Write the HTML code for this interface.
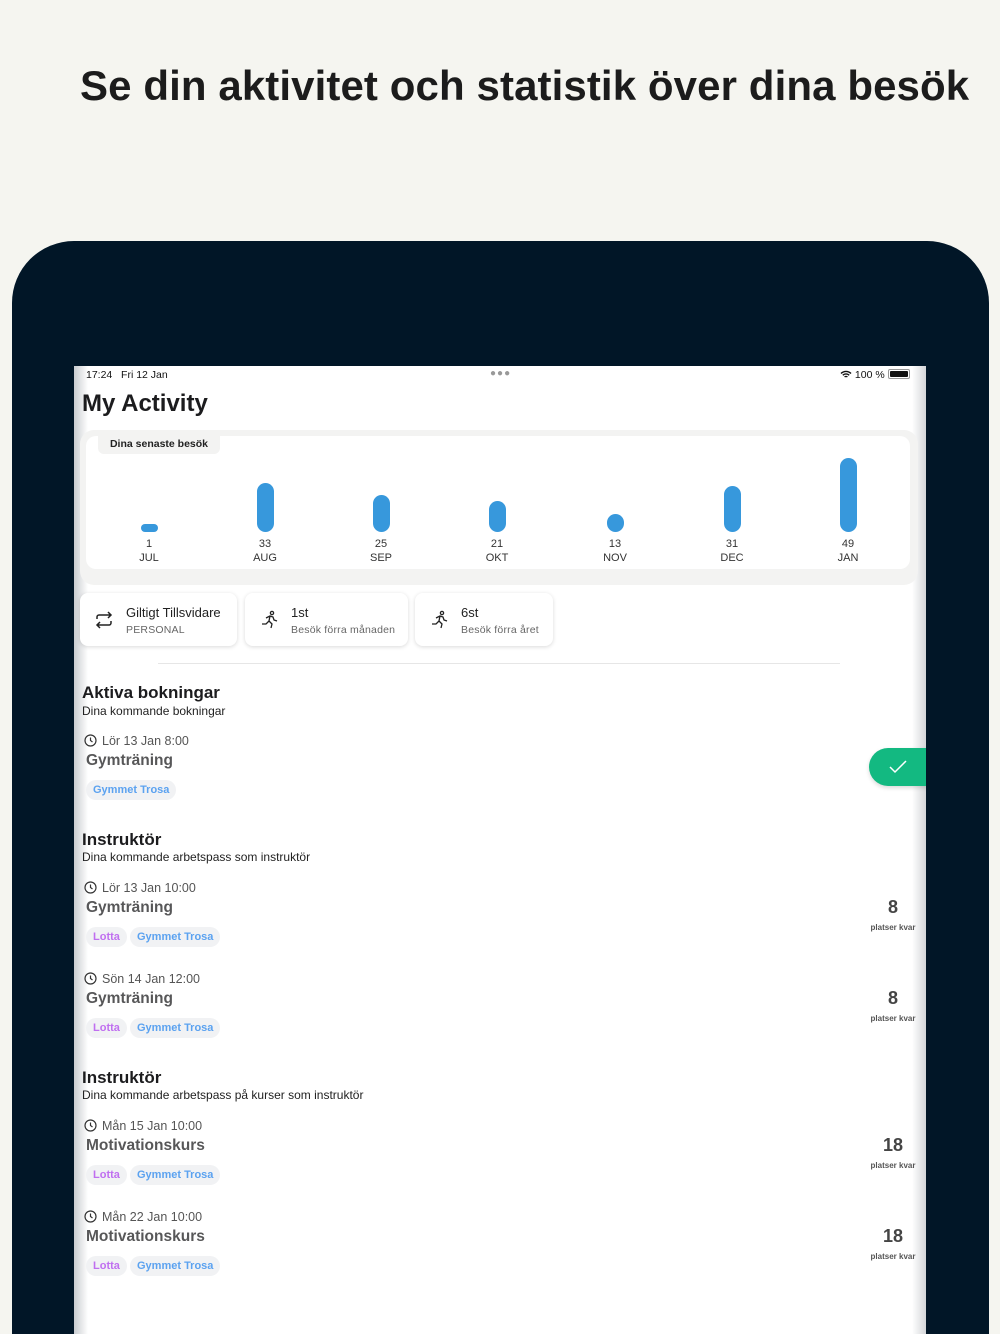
<!DOCTYPE html>
<html style="height:1334px;overflow:hidden"><head><meta charset="utf-8"><style>
*{margin:0;padding:0;box-sizing:border-box}
body{width:1000px;height:1334px;overflow:hidden;background:#f5f5f0;font-family:"Liberation Sans",sans-serif;position:relative;color:#1c1c1e}
.a{position:absolute;white-space:nowrap}
.frame{position:absolute;left:12px;top:241px;width:977px;height:1093px;background:#011627;border-radius:62px 62px 0 0}
.screen{position:absolute;left:74px;top:366px;width:852px;height:968px;background:#fff;overflow:hidden}
.shadeL{position:absolute;left:0;top:0;width:14px;height:100%;background:linear-gradient(90deg,#c9ccd0,rgba(255,255,255,0))}
.shadeR{position:absolute;right:0;top:0;width:14px;height:100%;background:linear-gradient(270deg,#d4d6d9,rgba(255,255,255,0))}
.bar{position:absolute;width:17px;background:#3798dc;border-radius:9px}
.num{position:absolute;width:60px;text-align:center;font-size:11px;color:#333}
.card{position:absolute;top:227px;height:53px;background:#fff;border-radius:8px;box-shadow:0 1px 4px rgba(0,0,0,.15)}
.card .t{position:absolute;left:46px;top:12px;font-size:13px;color:#222}
.card .s{position:absolute;left:46px;top:31px;font-size:10.5px;color:#666;letter-spacing:.2px}
.h{font-size:17px;font-weight:bold;color:#1c1c1e}
.sub{font-size:12px;color:#222}
.tm{font-size:12.5px;color:#555}
.ti{font-size:15.5px;color:#3a3a3c;font-weight:bold;opacity:.85}
.tag{position:absolute;height:20px;line-height:20px;border-radius:10px;background:#f1f2f4;font-size:11px;font-weight:bold;padding:0 7px}
.lot{color:#c06ff0}.gym{color:#5ba2f0}
.big{position:absolute;width:60px;text-align:center;font-size:18px;font-weight:bold;color:#444}
.pk{position:absolute;width:60px;text-align:center;font-size:8px;font-weight:bold;color:#555}
</style></head><body>
<div class="a" style="left:80px;top:62px;font-size:42px;letter-spacing:0.1px;font-weight:bold;color:#1c1c1c">Se din aktivitet och statistik över dina besök</div>
<div class="frame"></div>
<div class="screen">
<div class="shadeL"></div><div class="shadeR"></div>
<div class="a" style="left:12px;top:3px;font-size:10.5px;color:#111">17:24&nbsp;&nbsp;&nbsp;Fri 12 Jan</div>
<div class="a" style="left:416px;top:2px;font-size:10px;color:#999;letter-spacing:1px">●●●</div>
<div class="a" style="left:766px;top:3px;font-size:10.5px;color:#111">
<svg width="12" height="9" viewBox="0 0 12 9" style="vertical-align:-1px"><path d="M1 3.5a7 7 0 0 1 10 0M2.8 5.3a4.5 4.5 0 0 1 6.4 0M4.6 7a2 2 0 0 1 2.8 0" stroke="#111" stroke-width="1.4" fill="none"/></svg> 100 %
<span style="display:inline-block;width:22px;height:10px;border:1px solid #999;border-radius:2px;vertical-align:-1px;padding:1px"><span style="display:block;width:100%;height:100%;background:#111;border-radius:1px"></span></span></div>
<div class="a" style="left:8px;top:24px;font-size:24px;font-weight:bold;color:#1c1c1e">My Activity</div>
<div class="a" style="left:6px;top:64px;width:838px;height:155px;background:#f3f3f2;border-radius:14px"></div>
<div class="a" style="left:12px;top:70px;width:824px;height:133px;background:#fff;border-radius:10px"></div>
<div class="a" style="left:24px;top:70px;width:122px;height:18px;background:#f3f3f2;border-radius:0 0 6px 6px;font-size:10.5px;font-weight:bold;line-height:16px;text-align:center;color:#222">Dina senaste besök</div>
<div class="bar" style="left:67px;top:158px;height:8px"></div>
<div class="bar" style="left:183px;top:117px;height:49px"></div>
<div class="bar" style="left:299px;top:129px;height:37px"></div>
<div class="bar" style="left:415px;top:135px;height:31px"></div>
<div class="bar" style="left:533px;top:148px;height:18px"></div>
<div class="bar" style="left:650px;top:120px;height:46px"></div>
<div class="bar" style="left:766px;top:92px;height:74px"></div>
<div class="num" style="left:45px;top:172px">1<br><span style="line-height:17px">JUL</span></div>
<div class="num" style="left:161px;top:172px">33<br><span style="line-height:17px">AUG</span></div>
<div class="num" style="left:277px;top:172px">25<br><span style="line-height:17px">SEP</span></div>
<div class="num" style="left:393px;top:172px">21<br><span style="line-height:17px">OKT</span></div>
<div class="num" style="left:511px;top:172px">13<br><span style="line-height:17px">NOV</span></div>
<div class="num" style="left:628px;top:172px">31<br><span style="line-height:17px">DEC</span></div>
<div class="num" style="left:744px;top:172px">49<br><span style="line-height:17px">JAN</span></div>
<div class="card" style="left:6px;width:157px">
<svg class="a" style="left:14px;top:17px" width="20" height="20" viewBox="0 0 20 20" fill="none" stroke="#222" stroke-width="1.5"><path d="M3 9V7a2 2 0 0 1 2-2h12M14 2l3 3-3 3M17 11v2a2 2 0 0 1-2 2H3M6 18l-3-3 3-3"/></svg>
<div class="t">Giltigt Tillsvidare</div><div class="s">PERSONAL</div></div>
<div class="card" style="left:171px;width:163px">
<svg class="a" style="left:16px;top:17px" width="18" height="20" viewBox="0 0 18 20" fill="none" stroke="#222" stroke-width="1.3"><circle cx="11" cy="3" r="1.6"/><path d="M5 8l4-2 3 1 1 3 3 1M9 6l-1 5 3 3-1 4M8 11l-3 3H1"/></svg>
<div class="t">1st</div><div class="s">Besök förra månaden</div></div>
<div class="card" style="left:341px;width:138px">
<svg class="a" style="left:16px;top:17px" width="18" height="20" viewBox="0 0 18 20" fill="none" stroke="#222" stroke-width="1.3"><circle cx="11" cy="3" r="1.6"/><path d="M5 8l4-2 3 1 1 3 3 1M9 6l-1 5 3 3-1 4M8 11l-3 3H1"/></svg>
<div class="t">6st</div><div class="s">Besök förra året</div></div>
<div class="a" style="left:84px;top:297px;width:682px;height:1px;background:#e6e6e6"></div>

<div class="a h" style="left:8px;top:317px">Aktiva bokningar</div>
<div class="a sub" style="left:8px;top:338px">Dina kommande bokningar</div>
<div class="a tm" style="left:10px;top:368px"><svg width="13" height="13" viewBox="0 0 13 13" style="vertical-align:-2px;margin-right:5px" fill="none" stroke="#333" stroke-width="1.2"><circle cx="6.5" cy="6.5" r="5.5"/><path d="M6.5 3.5v3l2 1.5"/></svg>Lör 13 Jan 8:00</div>
<div class="a ti" style="left:12px;top:386px">Gymträning</div>
<div class="tag gym" style="left:12px;top:414px">Gymmet Trosa</div>
<div class="a" style="left:795px;top:382px;width:60px;height:38px;background:#13b981;border-radius:19px 0 0 19px;box-shadow:0 2px 4px rgba(0,0,0,.15)"><svg style="position:absolute;left:19px;top:11px" width="20" height="16" viewBox="0 0 20 16" fill="none" stroke="#fff" stroke-width="1.5"><path d="M2 8l5 5L18 2"/></svg></div>

<div class="a h" style="left:8px;top:464px">Instruktör</div>
<div class="a sub" style="left:8px;top:484px">Dina kommande arbetspass som instruktör</div>

<div class="a tm" style="left:10px;top:515px"><svg width="13" height="13" viewBox="0 0 13 13" style="vertical-align:-2px;margin-right:5px" fill="none" stroke="#333" stroke-width="1.2"><circle cx="6.5" cy="6.5" r="5.5"/><path d="M6.5 3.5v3l2 1.5"/></svg>Lör 13 Jan 10:00</div>
<div class="a ti" style="left:12px;top:533px">Gymträning</div>
<div class="tag lot" style="left:12px;top:561px">Lotta</div><div class="tag gym" style="left:56px;top:561px">Gymmet Trosa</div>
<div class="big" style="left:789px;top:531px">8</div><div class="pk" style="left:789px;top:557px">platser kvar</div>

<div class="a tm" style="left:10px;top:606px"><svg width="13" height="13" viewBox="0 0 13 13" style="vertical-align:-2px;margin-right:5px" fill="none" stroke="#333" stroke-width="1.2"><circle cx="6.5" cy="6.5" r="5.5"/><path d="M6.5 3.5v3l2 1.5"/></svg>Sön 14 Jan 12:00</div>
<div class="a ti" style="left:12px;top:624px">Gymträning</div>
<div class="tag lot" style="left:12px;top:652px">Lotta</div><div class="tag gym" style="left:56px;top:652px">Gymmet Trosa</div>
<div class="big" style="left:789px;top:622px">8</div><div class="pk" style="left:789px;top:648px">platser kvar</div>

<div class="a h" style="left:8px;top:702px">Instruktör</div>
<div class="a sub" style="left:8px;top:722px">Dina kommande arbetspass på kurser som instruktör</div>

<div class="a tm" style="left:10px;top:753px"><svg width="13" height="13" viewBox="0 0 13 13" style="vertical-align:-2px;margin-right:5px" fill="none" stroke="#333" stroke-width="1.2"><circle cx="6.5" cy="6.5" r="5.5"/><path d="M6.5 3.5v3l2 1.5"/></svg>Mån 15 Jan 10:00</div>
<div class="a ti" style="left:12px;top:771px">Motivationskurs</div>
<div class="tag lot" style="left:12px;top:799px">Lotta</div><div class="tag gym" style="left:56px;top:799px">Gymmet Trosa</div>
<div class="big" style="left:789px;top:769px">18</div><div class="pk" style="left:789px;top:795px">platser kvar</div>

<div class="a tm" style="left:10px;top:844px"><svg width="13" height="13" viewBox="0 0 13 13" style="vertical-align:-2px;margin-right:5px" fill="none" stroke="#333" stroke-width="1.2"><circle cx="6.5" cy="6.5" r="5.5"/><path d="M6.5 3.5v3l2 1.5"/></svg>Mån 22 Jan 10:00</div>
<div class="a ti" style="left:12px;top:862px">Motivationskurs</div>
<div class="tag lot" style="left:12px;top:890px">Lotta</div><div class="tag gym" style="left:56px;top:890px">Gymmet Trosa</div>
<div class="big" style="left:789px;top:860px">18</div><div class="pk" style="left:789px;top:886px">platser kvar</div>
</div>
</body></html>
